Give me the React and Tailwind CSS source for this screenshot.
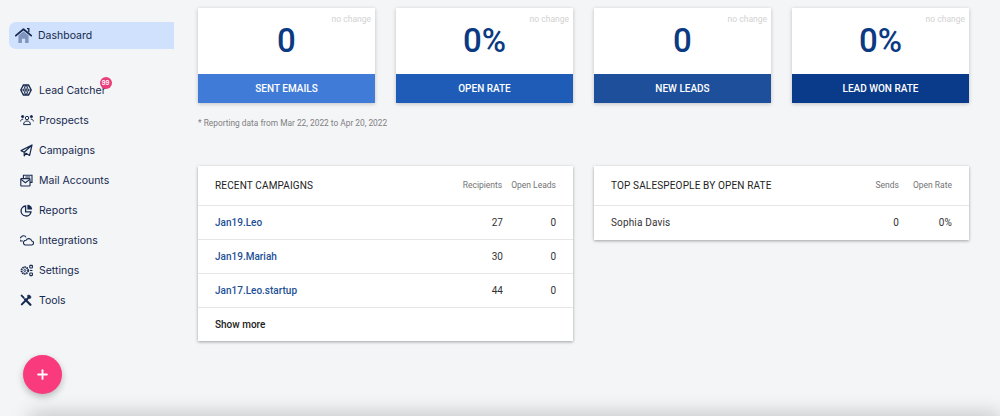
import React from "react";
import { Plus } from "lucide-react";

const navy = "#16294f";

const HomeIcon = () => (
  <svg width="17" height="15" viewBox="0 0 17 15" className="shrink-0">
    <path d="M3.4 7.6 8.5 3.4l5.1 4.2V15h-3.5v-4.2H6.9V15H3.4z" fill="#8095bd" />
    <path d="M.8 7.6 8.5 1.2l7.7 6.4" fill="none" stroke={navy} strokeWidth="1.8" strokeLinecap="round" strokeLinejoin="round" />
    <path d="M12 .6h1.8v3.6" fill="none" stroke={navy} strokeWidth="1.3" />
  </svg>
);

const CatcherIcon = () => (
  <svg width="12" height="12" viewBox="0 0 12 12" fill="none" stroke={navy}>
    <path d="M3.4 1h5.2L11.2 6l-2.6 5H3.4L.8 6z" strokeWidth="1.3" />
    <path d="M6 1 3.4 6 6 11l2.6-5zM.8 6h10.4" strokeWidth=".9" />
    <path d="M3.4 1 8.6 11M8.6 1 3.4 11" strokeWidth=".7" />
  </svg>
);

const ProspectsIcon = () => (
  <svg width="14" height="12" viewBox="0 0 14 12" fill="none" stroke={navy} strokeWidth="1">
    <circle cx="7" cy="4" r="1.7" />
    <path d="M3.6 10.6c0-2.4 1.4-3.6 3.4-3.6s3.4 1.2 3.4 3.6z" />
    <circle cx="2.6" cy="2.6" r="1.1" fill={navy} />
    <circle cx="11.4" cy="2.6" r="1.1" fill={navy} />
    <path d="M.6 7.4C.8 5.8 1.6 5.2 3.2 5.2M13.4 7.4c-.2-1.6-1-2.2-2.6-2.2" />
  </svg>
);

const CampaignIcon = () => (
  <svg width="13" height="13" viewBox="0 0 13 13" fill="none" stroke={navy} strokeWidth="1.2" strokeLinejoin="round">
    <path d="M12 1 1 6.6l3.2 1.6L12 1 9.6 11.4 6 9.2 4.2 11.8V8.2" />
  </svg>
);

const MailIcon = () => (
  <svg width="13" height="13" viewBox="0 0 13 13" fill="none" stroke={navy} strokeWidth="1.1">
    <path d="M3.4 4.2V1.2h8.6v7.2h-2" />
    <rect x=".8" y="4.6" width="9.2" height="7.4" rx=".6" />
    <path d="m1 5.4 4.4 3.4 4.4-3.4M5.4 3h4.8" />
  </svg>
);

const ReportsIcon = () => (
  <svg width="13" height="13" viewBox="0 0 13 13" fill="none" stroke={navy} strokeWidth="1.3">
    <path d="M5.6 2a5 5 0 1 0 5.4 5.8H5.6z" />
    <path d="M7.4.8a4.8 4.8 0 0 1 4.8 4.8H7.4z" fill={navy} stroke="none" />
  </svg>
);

const CloudsIcon = () => (
  <svg width="14" height="12" viewBox="0 0 14 12" fill="none" stroke={navy} strokeWidth="1.1" strokeLinejoin="round">
    <path d="M5 11h6.4a2 2 0 0 0 .3-4 3 3 0 0 0-5.6-.8A2.5 2.5 0 0 0 5 11z" />
    <path d="M6 3.4A2.6 2.6 0 0 0 1.4 3 2 2 0 0 0 1.8 7h1" />
  </svg>
);

const SettingsIcon = () => (
  <svg width="13" height="13" viewBox="0 0 13 13" fill="none" stroke={navy}>
    <circle cx="4.8" cy="6.5" r="3.3" strokeWidth="1.9" strokeDasharray="1.5 .6" />
    <circle cx="4.8" cy="6.5" r="1" strokeWidth=".9" />
    <rect x="9.8" y="1.4" width="2.6" height="2.6" rx=".5" strokeWidth="1.1" />
    <rect x="9.8" y="9" width="2.6" height="2.6" rx=".5" strokeWidth="1.1" />
    <path d="M9.8 6.5h2.6" strokeWidth="1.1" />
  </svg>
);

const ToolsIcon = () => (
  <svg width="12" height="12" viewBox="0 0 12 12" fill="none" stroke={navy}>
    <path d="M.8 1.6 1.8.8l2.6 2.8-1 1z" fill={navy} strokeWidth=".6" />
    <path d="m5 5.2 5.4 5.6" strokeWidth="2.2" strokeLinecap="round" />
    <path d="M8.2 4 1.8 10.4" strokeWidth="2" strokeLinecap="round" />
    <path d="M7.4 1.4a2.3 2.3 0 0 1 3.4 2.8L9 4.4 7.8 3.2z" fill={navy} strokeWidth=".5" />
  </svg>
);

const navItems = [
  { label: "Lead Catcher", icon: <CatcherIcon />, badge: true },
  { label: "Prospects", icon: <ProspectsIcon /> },
  { label: "Campaigns", icon: <CampaignIcon /> },
  { label: "Mail Accounts", icon: <MailIcon /> },
  { label: "Reports", icon: <ReportsIcon /> },
  { label: "Integrations", icon: <CloudsIcon /> },
  { label: "Settings", icon: <SettingsIcon /> },
  { label: "Tools", icon: <ToolsIcon /> },
];

const stats = [
  { value: "0", label: "SENT EMAILS", bar: "bg-[#3f7bd7]" },
  { value: "0%", label: "OPEN RATE", bar: "bg-[#1e5cb8]" },
  { value: "0", label: "NEW LEADS", bar: "bg-[#1d4f9b]" },
  { value: "0%", label: "LEAD WON RATE", bar: "bg-[#0a3a8a]" },
];

const campaigns = [
  { name: "Jan19.Leo", recipients: "27", leads: "0" },
  { name: "Jan19.Mariah", recipients: "30", leads: "0" },
  { name: "Jan17.Leo.startup", recipients: "44", leads: "0" },
];

const StatCard = ({ value, label, bar }) => (
  <div className="bg-white shadow-[0_1px_4px_rgba(0,0,0,0.22)]">
    <div className="h-[66px] relative flex items-center justify-center">
      <span className="absolute top-[6px] right-[4px] text-[8.5px] leading-[10px] text-[#d2d2d2]">no change</span>
      <span className="text-[33px] leading-none font-medium text-[#0b3a82] mt-[-1px]">{value}</span>
    </div>
    <div className={`h-[29px] flex items-center justify-center text-[10px] font-medium text-white ${bar}`}>{label}</div>
  </div>
);

const TableHead = ({ title, first, second }) => (
  <div className="h-[40px] flex items-center pl-[17px] pr-[17px] border-b border-[#e6e6e6]">
    <span className="flex-1 text-[10px] text-[#222222] tracking-[0.15px]">{title}</span>
    {first}
    {second}
  </div>
);

export default function App() {
  return (
    <div className="relative h-[416px] w-[1000px] overflow-hidden bg-[#f4f5f7] flex font-['Roboto',sans-serif]">
      <aside className="w-[198px] shrink-0 pt-[22px] pl-[9px] font-['Inter',sans-serif]">
        <div className="w-[165px] h-[27px] flex items-center gap-[6px] pl-[6px] rounded-l-[7px] bg-[#cfe1fc] text-[10.5px] text-[#16294f]">
          <HomeIcon />
          <span>Dashboard</span>
        </div>
        <nav className="mt-[26px] flex flex-col">
          {navItems.map((item) => (
            <div key={item.label} className="h-[30px] flex items-center text-[10.5px] text-[#16294f]">
              <span className="w-[30px] pl-[11px] flex justify-start">{item.icon}</span>
              <span className="relative top-[0.5px]">
                {item.label}
                {item.badge && (
                  <span className="absolute top-[-6px] right-[-6px] w-[12px] h-[12px] rounded-full bg-[#ea3d7b] text-white text-[6px] leading-[12px] text-center font-semibold">
                    99
                  </span>
                )}
              </span>
            </div>
          ))}
        </nav>
      </aside>

      <main className="w-[771px] pt-[8px]">
        <div className="grid grid-cols-4 gap-[21px]">
          {stats.map((s) => (
            <StatCard key={s.label} {...s} />
          ))}
        </div>
        <p className="mt-[15px] text-[8.35px] leading-[11px] text-[#808080]">* Reporting data from Mar 22, 2022 to Apr 20, 2022</p>

        <div className="mt-[37px] grid grid-cols-2 gap-[21px] items-start">
          <section className="bg-white shadow-[0_1px_3px_rgba(0,0,0,0.35)]">
            <TableHead
              title="RECENT CAMPAIGNS"
              first={<span className="text-[8.5px] text-[#737373]">Recipients</span>}
              second={<span className="ml-[9px] text-[8.5px] text-[#737373]">Open Leads</span>}
            />
            {campaigns.map((c) => (
              <div key={c.name} className="h-[34px] flex items-center pl-[17px] pr-[17px] border-b border-[#e6e6e6] text-[10px]">
                <span className="flex-1 font-medium text-[#1d5096]">{c.name}</span>
                <span className="w-[44px] text-right text-[#333333]">{c.recipients}</span>
                <span className="w-[53px] text-right text-[#333333]">{c.leads}</span>
              </div>
            ))}
            <div className="h-[33px] flex items-center pl-[17px] text-[10px] font-medium text-[#222222]">Show more</div>
          </section>

          <section className="bg-white shadow-[0_1px_3px_rgba(0,0,0,0.35)]">
            <TableHead
              title="TOP SALESPEOPLE BY OPEN RATE"
              first={<span className="text-[8.5px] text-[#737373]">Sends</span>}
              second={<span className="ml-[14px] text-[8.5px] text-[#737373]">Open Rate</span>}
            />
            <div className="h-[34px] flex items-center pl-[17px] pr-[17px] pb-[1px] text-[10px] text-[#333333] tracking-[0.15px]">
              <span className="flex-1">Sophia Davis</span>
              <span className="w-[30px] text-right">0</span>
              <span className="w-[53px] text-right">0%</span>
            </div>
          </section>
        </div>
      </main>

      <div className="absolute left-[30px] right-0 bottom-[-12px] h-[12px] shadow-[0_0_20px_rgba(0,0,0,0.3)]" />
      <button className="absolute left-[23px] top-[355px] w-[39px] h-[39px] rounded-full bg-[#f93a7c] shadow-[0_3px_7px_rgba(0,0,0,0.25)] flex items-center justify-center text-white">
        <Plus size={15} strokeWidth={3} />
      </button>
    </div>
  );
}
